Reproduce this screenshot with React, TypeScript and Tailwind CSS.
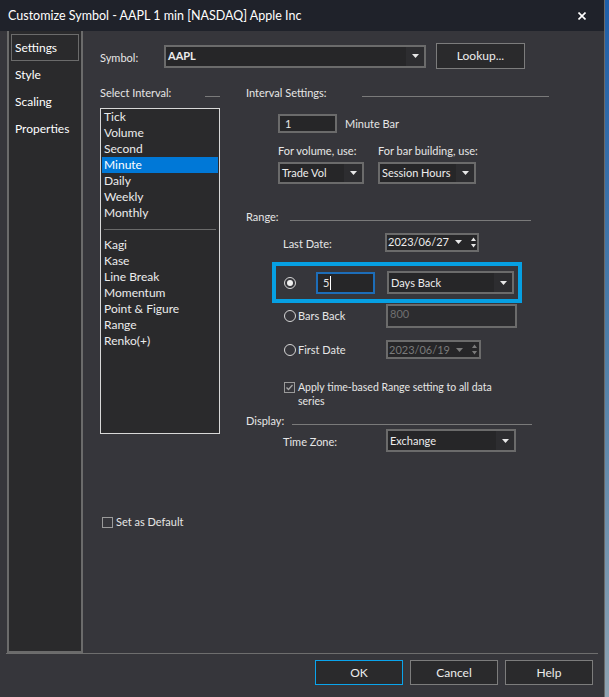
import clsx from "clsx";

// Dark "Customize Symbol" dialog, laid out to the 609x697 capture.

const BORDER = "border-[#6b6b6b]";

function Caret({ className, color = "#e8e8e8" }: { className?: string; color?: string }) {
  return (
    <svg width="7" height="4" viewBox="0 0 7 4" className={className}>
      <path d="M0 0h7L3.5 4z" fill={color} />
    </svg>
  );
}

function Spin({ className, color = "#e8e8e8" }: { className?: string; color?: string }) {
  return (
    <svg width="5" height="11" viewBox="0 0 5 11" className={className}>
      <path d="M0 4h5L2.5 0.5z" fill={color} />
      <path d="M0 7h5L2.5 10.5z" fill={color} />
    </svg>
  );
}

function Combo({
  value,
  className,
  bold,
}: {
  value: string;
  className?: string;
  bold?: boolean;
}) {
  return (
    <div className={clsx("flex border-2 bg-[#262628]", BORDER, className)}>
      <span
        className={clsx(
          "flex-1 flex items-center pl-[2px] text-[#ededed] whitespace-nowrap overflow-hidden",
          bold && "font-bold"
        )}
      >
        {value}
      </span>
      <span className="w-[18px] flex items-center justify-center bg-[#2d2d30]">
        <Caret />
      </span>
    </div>
  );
}

function DateBox({ value, disabled, className }: { value: string; disabled?: boolean; className?: string }) {
  const color = disabled ? "#7a7a7a" : "#e8e8e8";
  return (
    <div className={clsx("flex items-center border-2 bg-[#262628]", BORDER, className)}>
      <span className={clsx("pl-px", disabled ? "text-[#7a7a7a]" : "text-[#ededed]")}>{value}</span>
      <Caret className="ml-[6px]" color={color} />
      <Spin className="ml-[9px]" color={color} />
    </div>
  );
}

function Radio({ checked }: { checked?: boolean }) {
  return (
    <span className="w-[12px] h-[12px] rounded-full border border-[#d6d6d6] flex items-center justify-center shrink-0">
      {checked && <span className="w-[6px] h-[6px] rounded-full bg-[#f0f0f0]" />}
    </span>
  );
}

function Check({ checked }: { checked?: boolean }) {
  return (
    <span className="w-[11px] h-[11px] border border-[#9a9a9a] flex items-center justify-center shrink-0">
      {checked && (
        <svg width="9" height="9" viewBox="0 0 9 9">
          <path d="M1.5 4.5l2 2 4-4.5" stroke="#a8a8a8" strokeWidth="1.3" fill="none" />
        </svg>
      )}
    </span>
  );
}

function GroupHeader({ label, line }: { label: string; line: string }) {
  return (
    <div className="flex h-[16px] items-center justify-between">
      <span>{label}</span>
      <span className={clsx("h-px bg-[#7a7a7a] mt-[6px]", line)} />
    </div>
  );
}

const intervals = ["Tick", "Volume", "Second", "Minute", "Daily", "Weekly", "Monthly"];
const special = ["Kagi", "Kase", "Line Break", "Momentum", "Point & Figure", "Range", "Renko(+)"];

function Button({ label, primary }: { label: string; primary?: boolean }) {
  return (
    <button
      className={clsx(
        "w-[88px] h-[25px] bg-[#2a2a2c] border text-[12px] text-[#ededed]",
        primary ? "border-[#0aa4ec]" : "border-[#7c7c7c]"
      )}
    >
      {label}
    </button>
  );
}

export default function App() {
  return (
    <div className="w-[609px] h-[697px] flex bg-[#36363b] text-[11px] leading-[16px] text-[#e6e6e6] font-['Lato','Noto_Sans',sans-serif] overflow-hidden">
      <div className="w-[605px] flex flex-col border-r border-[#6a6a6a]">
        {/* title bar */}
        <div className="h-[31px] shrink-0 bg-[#1f222a] flex items-center justify-between pl-[8px] pr-[18px]">
          <span className="text-[12.5px] text-white">Customize Symbol - AAPL 1 min [NASDAQ] Apple Inc</span>
          <svg width="8" height="8" viewBox="0 0 8 8">
            <path d="M0.5 0.5l7 7M7.5 0.5l-7 7" stroke="#ffffff" strokeWidth="1.6" />
          </svg>
        </div>

        <div className="h-[622px] shrink-0 flex">
          {/* side tabs */}
          <div
            className={clsx(
              "ml-[7px] w-[76px] border-x-2 border-b-2 bg-[#2a2a2c] flex flex-col pt-[3px] px-[2px] text-[12px] text-white",
              BORDER
            )}
          >
            <div className={clsx("h-[27px] border flex items-center pl-[3px]", BORDER)}>Settings</div>
            <div className="h-[27px] flex items-center pl-[4px]">Style</div>
            <div className="h-[27px] flex items-center pl-[4px]">Scaling</div>
            <div className="h-[27px] flex items-center pl-[4px]">Properties</div>
          </div>

          <div className="flex-1 pl-[17px] pt-[12px]">
            {/* symbol row */}
            <div className="flex items-center h-[26px]">
              <span className="w-[64px] mt-[3px]">Symbol:</span>
              <Combo value="AAPL" bold className="w-[262px] h-[23px]" />
              <button className="ml-[10px] w-[89px] h-[26px] border border-[#7c7c7c] bg-[#2a2a2c] text-[12px] text-[#ededed]">
                Lookup...
              </button>
            </div>

            <div className="flex mt-[16px] gap-[26px]">
              {/* intervals */}
              <div className="w-[120px] flex flex-col">
                <GroupHeader label="Select Interval:" line="w-[15px]" />
                <div className="mt-[7px] h-[326px] border border-[#d8d8d8] bg-[#2a2a2c] px-px text-[12px] text-[#ececec]">
                  {intervals.map((i) => (
                    <div key={i} className={clsx("h-[16px] pl-[2px]", i === "Minute" && "bg-[#0078d7] text-white")}>
                      {i}
                    </div>
                  ))}
                  <div className="h-[16px] flex items-center px-[2px]">
                    <span className="h-px flex-1 bg-[#6a6a6a]" />
                  </div>
                  {special.map((i) => (
                    <div key={i} className="h-[16px] pl-[2px]">
                      {i}
                    </div>
                  ))}
                </div>
                <div className="mt-[80px] flex items-center gap-[3px] ml-[2px]">
                  <Check />
                  <span>Set as Default</span>
                </div>
              </div>

              {/* settings */}
              <div className="w-[303px] flex flex-col">
                <GroupHeader label="Interval Settings:" line="w-[187px]" />
                <div className="pl-[32px]">
                  <div className="mt-[13px] flex items-center">
                    <div className={clsx("w-[59px] h-[19px] border-2 bg-[#262628] flex items-center pl-[5px]", BORDER)}>1</div>
                    <span className="ml-[8px]">Minute Bar</span>
                  </div>
                  <div className="mt-[10px] flex">
                    <span className="w-[100px]">For volume, use:</span>
                    <span>For bar building, use:</span>
                  </div>
                  <div className="mt-[3px] flex">
                    <Combo value="Trade Vol" className="w-[86px] h-[22px]" />
                    <Combo value="Session Hours" className="ml-[14px] w-[98px] h-[22px]" />
                  </div>
                </div>

                <div className="mt-[25px] w-[285px]">
                  <GroupHeader label="Range:" line="w-[241px]" />
                </div>
                <div className="mt-[7px] flex items-center pl-[37px]">
                  <span className="w-[102px] mt-[4px]">Last Date:</span>
                  <DateBox value="2023/06/27" className="w-[94px] h-[19px]" />
                </div>

                <div className="mt-[10px] ml-[26px] w-[250px] h-[41px] border-4 border-[#06a0e3] flex items-center pl-[8px]">
                  <Radio checked />
                  <div className="ml-[20px] w-[59px] h-[22px] border-2 border-[#1d6db8] bg-[#262628] flex items-center pl-[5px]">
                    5<span className="w-px h-[14px] bg-white ml-px" />
                  </div>
                  <Combo value="Days Back" className="ml-[12px] w-[127px] h-[23px]" />
                </div>

                <div className="mt-px flex items-center pl-[38px]">
                  <Radio />
                  <span className="ml-[2px] w-[88px]">Bars Back</span>
                  <div className={clsx("w-[131px] h-[24px] border-2 bg-[#2c2c2f] text-[#6f6f6f] pl-[2px]", BORDER)}>800</div>
                </div>

                <div className="mt-[12px] flex items-center pl-[38px]">
                  <Radio />
                  <span className="ml-[2px] w-[88px]">First Date</span>
                  <DateBox value="2023/06/19" disabled className="w-[95px] h-[19px]" />
                </div>

                <div className="mt-[21px] flex items-start pl-[38px]">
                  <span className="mt-[2px]">
                    <Check checked />
                  </span>
                  <span className="ml-[3px] leading-[14px] text-[10.5px]">
                    Apply time-based Range setting to all data
                    <br />
                    series
                  </span>
                </div>

                <div className="mt-[5px] w-[286px]">
                  <GroupHeader label="Display:" line="w-[240px]" />
                </div>
                <div className="flex items-center pl-[37px]">
                  <span className="w-[103px] mt-[2px]">Time Zone:</span>
                  <Combo value="Exchange" className="w-[130px] h-[23px]" />
                </div>
              </div>
            </div>
          </div>
        </div>

        <div className="h-px ml-[6px] mr-[6px] bg-[#6e6e6e]" />
        <div className="mt-[6px] flex justify-end gap-[7px] pr-[11px]">
          <Button label="OK" primary />
          <Button label="Cancel" />
          <Button label="Help" />
        </div>
      </div>
      <div className="w-[4px] bg-gradient-to-b from-[#1e5fa8] via-[#4f7fa8] to-[#8fa3b2]" />
    </div>
  );
}
